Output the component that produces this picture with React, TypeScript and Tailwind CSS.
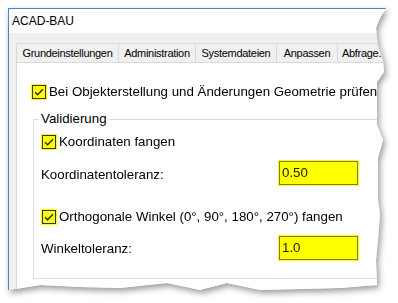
import React from "react";

const font = { fontFamily: '"Liberation Sans", Arial, sans-serif' };

function Check() {
  return (
    <svg width="16" height="16" viewBox="0 0 16 16" className="shrink-0">
      <rect x="0" y="0" width="16" height="16" fill="#ffff00" />
      <rect x="1.5" y="1.5" width="13" height="13" fill="none" stroke="#333333" strokeWidth="1" />
      <path d="M4 8.2 L6.6 10.8 L12 5.2" fill="none" stroke="#222222" strokeWidth="1.3" />
    </svg>
  );
}

function YInput({ value }: { value: string }) {
  return (
    <div className="w-[79px] h-[24px] bg-[#ffff00] border border-[#7d7d3a] outline outline-1 outline-[#ffff00] flex items-center pl-[2px] text-[13.3px] text-[#1a1a1a]">
      {value}
    </div>
  );
}

export default function App() {
  const tabs: [string, number][] = [
    ["Grundeinstellungen", 103],
    ["Administration", 77],
    ["Systemdateien", 81],
    ["Anpassen", 61],
  ];
  return (
    <div className="w-[398px] h-[303px] bg-white pl-[8px] pt-[8px] overflow-hidden" style={font}>
      <div className="drop-shadow-[2px_3px_3px_rgba(0,0,0,0.4)]">
        <div className="w-[384px] h-[286px] bg-[#f0f0f0] border-l border-t border-[#3d8ad4] flex flex-col [clip-path:polygon(0_0,378px_0,372px_10px,368px_20px,370px_37px,375px_52px,376px_64px,369px_74px,369px_117px,375px_132px,370px_150px,370px_192px,372px_207px,370px_232px,368px_252px,369px_277px,332px_280px,292px_281px,252px_282px,219px_275px,192px_282px,159px_275px,112px_280px,72px_279px,32px_277px,2px_282px,0_282px)]">
          <div className="h-[24px] bg-white flex items-center pl-[3px] text-[12px] text-black shrink-0">
            ACAD-BAU
          </div>
          <div className="flex-1 flex flex-col pl-[7px] pt-[10px]">
            <div className="flex h-[19px] shrink-0">
              {tabs.map(([t, w], i) => (
                <div
                  key={t}
                  className={`h-[19px] flex items-center justify-center border-t border-r border-[#d9d9d9] text-[11px] tracking-[-0.3px] text-black shrink-0 ${i === 0 ? "border-l" : ""}`}
                  style={{ width: w }}
                >
                  {t}
                </div>
              ))}
              <div className="h-[19px] w-[70px] flex items-center pl-[4px] border-t border-r border-[#d9d9d9] text-[11px] tracking-[-0.3px] text-black shrink-0 whitespace-nowrap">
                Abfrage...
              </div>
            </div>
            <div className="flex-1 bg-white border-l border-t border-[#d9d9d9] flex flex-col pl-[14px] pt-[21px] text-[13.3px] text-black">
              <div className="flex items-center h-[16px]">
                <Check />
                <span className="ml-[2px] whitespace-nowrap">Bei Objekterstellung und Änderungen Geometrie prüfen</span>
              </div>
              <div className="relative ml-[2px] mt-[19px] w-[360px] border border-[#dcdcdc] pl-[7px] pt-[14px] pb-[18px] flex flex-col">
                <span className="absolute -top-[9px] left-[5px] px-[2px] bg-white leading-[16px]">Validierung</span>
                <div className="flex items-center h-[16px]">
                  <Check />
                  <span className="ml-[2px] whitespace-nowrap">Koordinaten fangen</span>
                </div>
                <div className="flex items-center mt-[11px]">
                  <span className="w-[238px] pt-[3px]">Koordinatentoleranz:</span>
                  <YInput value="0.50" />
                </div>
                <div className="flex items-center h-[16px] mt-[24px]">
                  <Check />
                  <span className="ml-[2px] whitespace-nowrap">Orthogonale Winkel (0°, 90°, 180°, 270°) fangen</span>
                </div>
                <div className="flex items-center mt-[11px]">
                  <span className="w-[238px] pt-[2px]">Winkeltoleranz:</span>
                  <YInput value="1.0" />
                </div>
              </div>
            </div>
          </div>
        </div>
      </div>
    </div>
  );
}
